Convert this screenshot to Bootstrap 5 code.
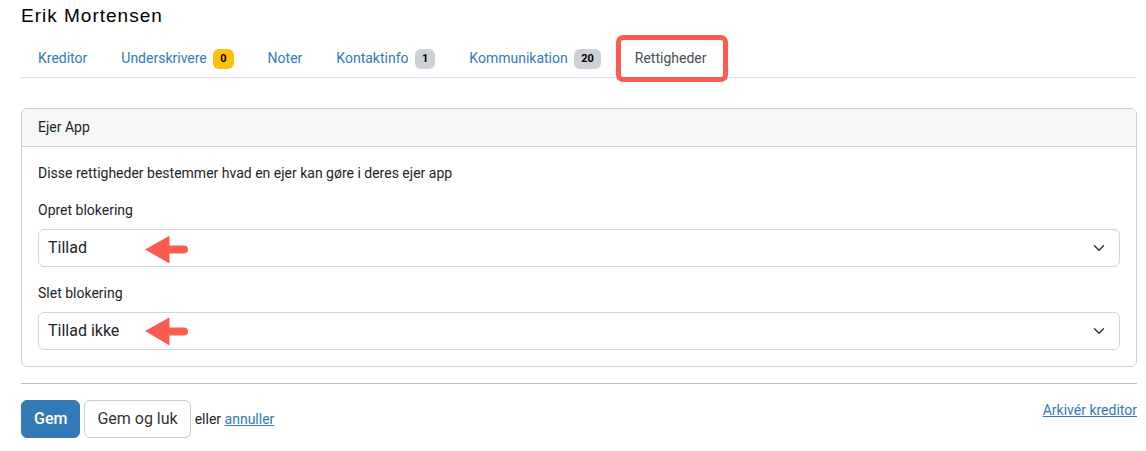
<!DOCTYPE html>
<html lang="da">
<head>
<meta charset="utf-8">
<meta name="viewport" content="width=device-width, initial-scale=1">
<title>Erik Mortensen – Rettigheder</title>
<link rel="stylesheet" href="https://cdn.jsdelivr.net/npm/bootstrap@5.3.0/dist/css/bootstrap.min.css">
<style>
  body { font-family: Roboto, "Liberation Sans", sans-serif; font-size: 14px; line-height: 21px; color: #212529; background: #fff; }
  a { color: #337ab7; }
  .page { padding: 4px 9px 12px 21px; }
  .owner-name { font-family: "Liberation Sans", Arial, sans-serif; font-size: 19px; line-height: 24px; letter-spacing: 1px; color: #000; margin-bottom: 11px; }
  .nav-tabs { margin-bottom: 30px; }
  .nav-tabs .nav-link { color: #337ab7; border-color: transparent; }
  .nav-tabs .nav-link.active { position: relative; color: #495057; background: transparent; border-color: transparent; }
  .nav-tabs .badge { font-size: 11px; line-height: 12px; padding: 4px 7px; margin-left: 3px; color: #000; vertical-align: middle; }
  .count-muted { background: #ced0d8; }
  .highlight { position: absolute; inset: -5px -5px -5px -3px; border: 5px solid #fc5b50; border-radius: 7px; pointer-events: none; }
  .card { --bs-card-border-color: #cfcfcf; --bs-card-cap-bg: #f6f6f6; }
  .form-select { padding-left: 9px; border-color: #ced4da; color: #212529; }
  .pointer { position: absolute; left: 107px; top: 6px; width: 44px; height: 29px; pointer-events: none; }
  .rule { margin: 16px 0; color: #000; opacity: .25; }
  .btn-save { --bs-btn-bg: #337ab7; --bs-btn-border-color: #337ab7; --bs-btn-color: #fff; --bs-btn-hover-bg: #286090; --bs-btn-hover-color: #fff; font-weight: 500; }
  .btn-plain { --bs-btn-bg: #fff; --bs-btn-border-color: #ccc; --bs-btn-color: #333; --bs-btn-hover-bg: #eee; }
</style>
</head>
<body>
<main class="page">
  <h1 class="owner-name fw-normal">Erik Mortensen</h1>

  <ul class="nav nav-tabs">
    <li class="nav-item"><a class="nav-link" href="#">Kreditor</a></li>
    <li class="nav-item"><a class="nav-link" href="#">Underskrivere <span class="badge bg-warning">0</span></a></li>
    <li class="nav-item"><a class="nav-link" href="#">Noter</a></li>
    <li class="nav-item"><a class="nav-link" href="#">Kontaktinfo <span class="badge count-muted">1</span></a></li>
    <li class="nav-item"><a class="nav-link" href="#">Kommunikation <span class="badge count-muted">20</span></a></li>
    <li class="nav-item"><a class="nav-link active" aria-current="page" href="#">Rettigheder<span class="highlight"></span></a></li>
  </ul>

  <form>
    <section class="card">
      <div class="card-header">Ejer App</div>
      <div class="card-body">
        <p class="mb-3">Disse rettigheder bestemmer hvad en ejer kan gøre i deres ejer app</p>
        <div class="mb-3">
          <label class="form-label d-block" for="create-block">Opret blokering</label>
          <div class="position-relative">
            <select class="form-select" id="create-block">
              <option selected>Tillad</option>
              <option>Tillad ikke</option>
            </select>
            <svg class="pointer" viewBox="0 0 44 29" aria-hidden="true"><path d="M0 14.500 24.500 .8V10.500H39a4 4 0 0 1 0 8H24.500v10z" fill="#fc5b50"/></svg>
          </div>
        </div>
        <div>
          <label class="form-label d-block" for="delete-block">Slet blokering</label>
          <div class="position-relative">
            <select class="form-select" id="delete-block">
              <option>Tillad</option>
              <option selected>Tillad ikke</option>
            </select>
            <svg class="pointer" viewBox="0 0 44 29" aria-hidden="true"><path d="M0 13 24.500 -.6V9.500H39a4 4 0 0 1 0 8H24.500v10z" fill="#fc5b50"/></svg>
          </div>
        </div>
      </div>
    </section>

    <hr class="rule">

    <div class="d-flex justify-content-between align-items-start">
      <div class="d-flex align-items-center gap-1">
        <button type="submit" class="btn btn-save">Gem</button>
        <button type="submit" class="btn btn-plain">Gem og luk</button>
        <span>eller <a href="#">annuller</a></span>
      </div>
      <a href="#">Arkivér kreditor</a>
    </div>
  </form>
</main>
<script src="https://cdn.jsdelivr.net/npm/bootstrap@5.3.0/dist/js/bootstrap.bundle.min.js"></script>
</body>
</html>
